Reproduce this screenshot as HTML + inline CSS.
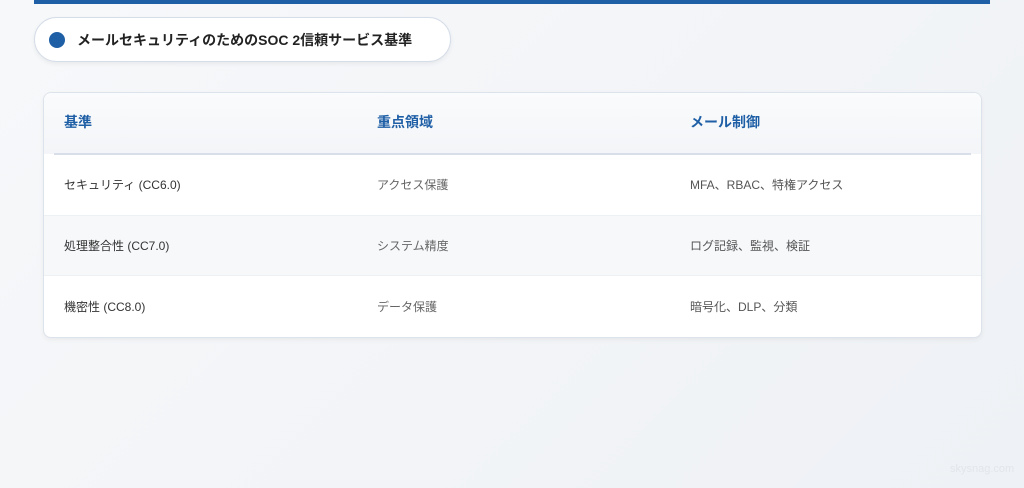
<!DOCTYPE html>
<html><head><meta charset="utf-8"><style>
*{margin:0;padding:0;box-sizing:border-box}
body{width:1024px;height:488px;overflow:hidden;background:linear-gradient(135deg,#f7f8fa,#eef1f5);font-family:"Liberation Sans","Noto Sans CJK JP",sans-serif;position:relative}
.bar{position:absolute;left:34px;top:0;width:956px;height:4px;background:#1f5fa6}
.pill{position:absolute;left:34px;top:17px;width:417px;height:45px;background:#fff;border:1px solid #d5dde8;border-radius:23px;box-shadow:0 2px 4px rgba(0,0,0,.06)}
.pill .dot{position:absolute;left:14px;top:14px;width:16px;height:16px;border-radius:50%;background:#1f5fa6}
.pill .t{position:absolute;left:42px;top:12px;font-size:14px;font-weight:bold;color:#222}
.card{position:absolute;left:43px;top:92px;width:939px;height:246px;background:#fff;border:1px solid #dde3ea;border-radius:8px;box-shadow:0 2px 5px rgba(0,0,0,.05);overflow:hidden}
.head{height:61px;background:linear-gradient(#fafbfc,#f3f5f8);position:relative}
.head span{position:absolute;top:19px;font-size:14px;font-weight:bold;color:#1f5fa6}
.line{position:absolute;left:10px;right:10px;top:60px;height:2px;background:#d8dfe8}
.row{position:absolute;left:0;right:0;height:61px;font-size:12px}
.row span{position:absolute;top:21px}
.c1{left:20px;color:#333}.c2{left:333px;color:#666}.c3{left:646px;color:#555}
.head .c1{left:20px}.head .c2{left:333px}.head .c3{left:646px}
.wm{position:absolute;left:950px;top:463px;font-size:11px;color:#e2e5ea}
</style></head><body>
<div class="bar"></div>
<div class="pill"><div class="dot"></div><div class="t">メールセキュリティのためのSOC 2信頼サービス基準</div></div>
<div class="card">
<div class="head"><span class="c1">基準</span><span class="c2">重点領域</span><span class="c3">メール制御</span></div>
<div class="line"></div>
<div class="row" style="top:62px"><span class="c1">セキュリティ (CC6.0)</span><span class="c2">アクセス保護</span><span class="c3">MFA、RBAC、特権アクセス</span></div>
<div class="row" style="top:122px;background:#f6f8fa;border-top:1px solid #eef1f4;border-bottom:1px solid #eef1f4"><span class="c1">処理整合性 (CC7.0)</span><span class="c2">システム精度</span><span class="c3">ログ記録、監視、検証</span></div>
<div class="row" style="top:184px"><span class="c1">機密性 (CC8.0)</span><span class="c2">データ保護</span><span class="c3">暗号化、DLP、分類</span></div>
</div>
<div class="wm">skysnag.com</div>
</body></html>
